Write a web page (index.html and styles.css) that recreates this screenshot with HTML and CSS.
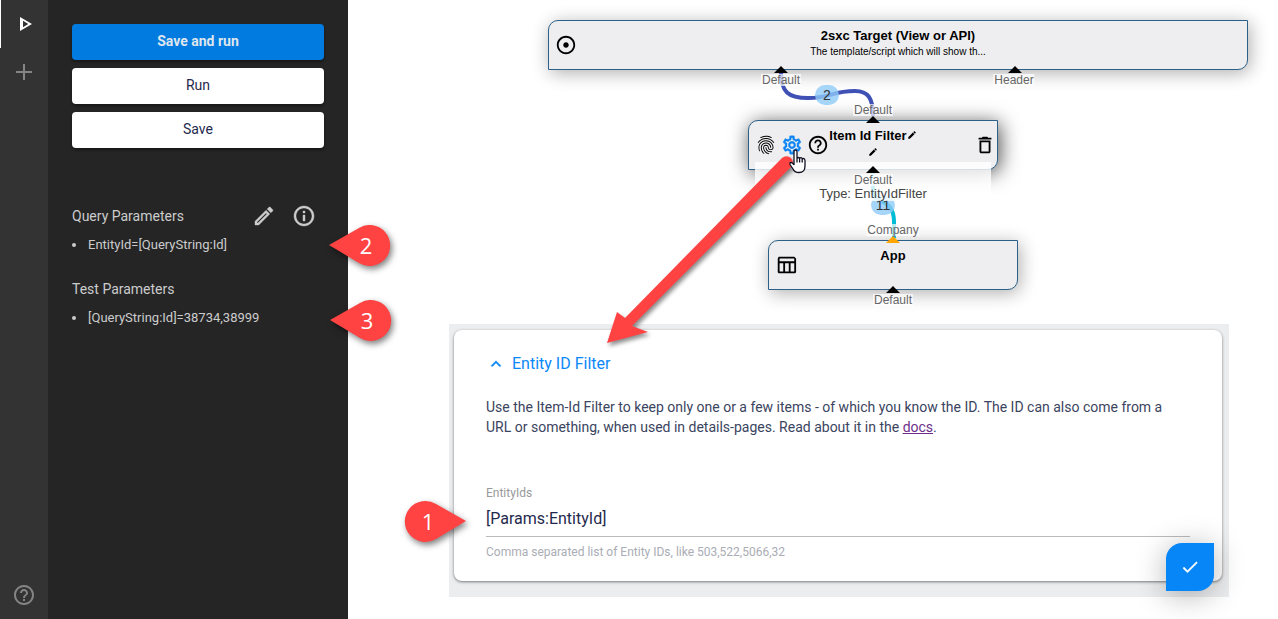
FILE: index.html
```html
<!DOCTYPE html>
<html lang="en">
<head>
<meta charset="utf-8">
<title>Visual Query Designer</title>
<link rel="stylesheet" href="styles.css">
</head>
<body>
<svg class="defs" aria-hidden="true">
  <symbol id="i-help" viewBox="0 0 24 24"><path d="M11 18h2v-2h-2v2zm1-16C6.48 2 2 6.48 2 12s4.48 10 10 10 10-4.48 10-10S17.52 2 12 2zm0 18c-4.41 0-8-3.59-8-8s3.59-8 8-8 8 3.59 8 8-3.59 8-8 8zm0-14c-2.21 0-4 1.79-4 4h2c0-1.1.9-2 2-2s2 .9 2 2c0 2-3 1.75-3 5h2c0-2.25 3-2.5 3-5 0-2.21-1.79-4-4-4z"/></symbol>
  <symbol id="i-pencil" viewBox="0 0 24 24"><path d="M3 17.25V21h3.75L17.81 9.94l-3.75-3.75L3 17.25zM20.71 7.04c.39-.39.39-1.02 0-1.41l-2.34-2.34a1 1 0 0 0-1.41 0l-1.83 1.83 3.75 3.75 1.83-1.83z"/></symbol>
</svg>
<div class="app">
  <nav class="rail">
    <button class="rail-btn active" aria-label="Run"><svg class="icon" viewBox="0 0 24 24"><path d="M10 8.640L15.270 12 10 15.360V8.640M7 5v14l12-7L7 5z"/></svg></button>
    <button class="rail-btn" aria-label="Add"><svg class="icon" viewBox="0 0 24 24"><path d="M20 13h-7v7h-2v-7H4v-2h7V4h2v7h7v2z"/></svg></button>
    <button class="rail-btn rail-end" aria-label="Help"><svg class="icon"><use href="#i-help"/></svg></button>
  </nav>
  <aside class="sidebar">
    <div class="actions">
      <button class="btn primary">Save and run</button>
      <button class="btn">Run</button>
      <button class="btn">Save</button>
    </div>
    <section class="params">
      <div class="params-head">
        <h2>Query Parameters</h2>
        <button class="icon-btn" aria-label="Edit parameters"><svg class="icon bold" viewBox="0 0 24 24"><path d="M14.060 9.020l.92.92L5.920 19H5v-.92l9.060-9.060M17.660 3c-.25 0-.51.1-.7.29l-1.830 1.830 3.750 3.750 1.830-1.830c.39-.39.39-1.020 0-1.410l-2.340-2.340c-.2-.2-.45-.29-.71-.29zm-3.600 3.190L3 17.250V21h3.750L17.810 9.940l-3.750-3.750z"/></svg></button>
        <button class="icon-btn" aria-label="Parameter info"><svg class="icon bold" viewBox="0 0 24 24"><path d="M11 7h2v2h-2zm0 4h2v6h-2zm1-9C6.480 2 2 6.480 2 12s4.480 10 10 10 10-4.480 10-10S17.520 2 12 2zm0 18c-4.410 0-8-3.590-8-8s3.590-8 8-8 8 3.590 8 8-3.590 8-8 8z"/></svg></button>
      </div>
      <ul><li>EntityId=[QueryString:Id]</li></ul>
    </section>
    <section class="params">
      <div class="params-head"><h2>Test Parameters</h2></div>
      <ul><li>[QueryString:Id]=38734,38999</li></ul>
    </section>
  </aside>
  <main class="main">
    <div class="canvas">
      <div class="node target">
        <svg class="node-icon" viewBox="0 0 24 24"><path d="M12 2C6.490 2 2 6.490 2 12s4.490 10 10 10 10-4.490 10-10S17.510 2 12 2zm0 18c-4.410 0-8-3.590-8-8s3.590-8 8-8 8 3.590 8 8-3.590 8-8 8zm3-8c0 1.660-1.340 3-3 3s-3-1.340-3-3 1.340-3 3-3 3 1.340 3 3z"/></svg>
        <div class="node-text"><h3>2sxc Target (View or API)</h3><p>The template/script which will show th...</p></div>
      </div>
      <div class="node filter">
        <div class="node-tools">
          <button class="tool" aria-label="Identity"><svg class="node-icon" viewBox="0 0 24 24"><path d="M17.81 4.47c-.08 0-.16-.02-.23-.06C15.66 3.42 14 3 12.01 3c-1.98 0-3.86.47-5.57 1.41-.24.13-.54.04-.68-.2-.13-.24-.04-.55.2-.68C7.82 2.52 9.86 2 12.01 2c2.13 0 3.99.47 6.03 1.52.25.13.34.43.21.67-.09.18-.26.28-.44.28zM3.500 9.720c-.1 0-.2-.03-.29-.09-.23-.16-.28-.47-.12-.7.99-1.400 2.250-2.500 3.750-3.270C9.980 4.040 14 4.030 17.150 5.650c1.500.77 2.760 1.860 3.750 3.250.16.22.11.54-.12.7-.23.16-.54.11-.7-.12-.9-1.260-2.040-2.250-3.390-2.940-2.870-1.470-6.540-1.470-9.400.01-1.360.7-2.500 1.700-3.400 2.960-.08.14-.23.21-.39.21zm6.250 12.070c-.13 0-.26-.05-.35-.15-.87-.87-1.340-1.430-2.010-2.640-.69-1.230-1.050-2.730-1.050-4.340 0-2.970 2.540-5.390 5.660-5.390s5.660 2.420 5.660 5.390c0 .28-.22.5-.5.5s-.5-.22-.5-.5c0-2.420-2.090-4.390-4.660-4.390-2.570 0-4.660 1.970-4.660 4.390 0 1.440.32 2.770.93 3.850.64 1.150 1.080 1.640 1.850 2.420.19.2.19.51 0 .71-.11.1-.24.15-.37.15zm7.170-1.850c-1.190 0-2.240-.3-3.100-.89-1.490-1.010-2.380-2.650-2.380-4.390 0-.28.22-.5.5-.5s.5.22.5.5c0 1.410.72 2.740 1.940 3.560.71.48 1.540.71 2.540.71.24 0 .64-.03 1.040-.1.27-.05.53.13.58.41.05.27-.13.53-.41.58-.57.11-1.070.12-1.210.12zM14.910 22c-.04 0-.09-.01-.13-.02-1.590-.44-2.630-1.030-3.720-2.100-1.400-1.390-2.170-3.240-2.170-5.220 0-1.620 1.380-2.940 3.080-2.940 1.700 0 3.080 1.320 3.080 2.940 0 1.070.93 1.940 2.080 1.940s2.080-.87 2.080-1.940c0-3.770-3.250-6.830-7.250-6.830-2.840 0-5.440 1.580-6.610 4.030-.39.81-.59 1.760-.59 2.800 0 .78.07 2.010.67 3.610.1.26-.03.55-.29.64-.26.1-.55-.04-.64-.29-.49-1.310-.73-2.610-.73-3.960 0-1.200.23-2.290.68-3.240 1.330-2.790 4.280-4.600 7.510-4.600 4.550 0 8.250 3.510 8.250 7.830 0 1.620-1.380 2.940-3.080 2.940s-3.080-1.320-3.080-2.940c0-1.070-.93-1.940-2.080-1.940s-2.080.87-2.080 1.940c0 1.710.66 3.310 1.870 4.510.95.94 1.860 1.460 3.270 1.850.27.07.42.35.35.61-.05.23-.26.38-.47.38z"/></svg></button>
          <button class="tool blue" aria-label="Configure"><svg class="node-icon bold" viewBox="0 0 24 24"><path d="M19.43 12.98c.04-.32.07-.64.07-.98 0-.34-.03-.66-.07-.98l2.11-1.65c.19-.15.24-.42.12-.64l-2-3.46c-.09-.16-.26-.25-.44-.25-.06 0-.12.01-.17.03l-2.49 1c-.52-.4-1.08-.73-1.69-.98l-.38-2.65C14.46 2.18 14.25 2 14 2h-4c-.25 0-.46.18-.49.42l-.38 2.65c-.61.25-1.17.59-1.69.98l-2.49-1c-.06-.02-.12-.03-.18-.03-.17 0-.34.09-.43.25l-2 3.46c-.13.22-.07.49.12.64l2.11 1.65c-.04.32-.07.65-.07.98 0 .33.03.66.07.98l-2.11 1.65c-.19.15-.24.42-.12.64l2 3.46c.09.16.26.25.44.25.06 0 .12-.01.17-.03l2.49-1c.52.4 1.08.73 1.69.98l.38 2.65c.03.24.24.42.49.42h4c.25 0 .46-.18.49-.42l.38-2.65c.61-.25 1.17-.59 1.69-.98l2.49 1c.06.02.12.03.18.03.17 0 .34-.09.43-.25l2-3.46c.12-.22.07-.49-.12-.64l-2.11-1.65zm-1.98-1.71c.04.31.05.52.05.73 0 .21-.02.43-.05.73l-.14 1.13.89.7 1.08.84-.7 1.21-1.27-.51-1.04-.42-.9.68c-.43.32-.84.56-1.25.73l-1.06.43-.16 1.13-.2 1.35h-1.4l-.19-1.35-.16-1.13-1.06-.43c-.43-.18-.83-.41-1.23-.71l-.91-.7-1.06.43-1.27.51-.7-1.21 1.08-.84.89-.7-.14-1.13c-.03-.31-.05-.54-.05-.74s.02-.43.05-.73l.14-1.13-.89-.7-1.08-.84.7-1.21 1.27.51 1.04.42.9-.68c.43-.32.84-.56 1.25-.73l1.06-.43.16-1.13.2-1.35h1.39l.19 1.35.16 1.13 1.06.43c.43.18.83.41 1.23.71l.91.7 1.06-.43 1.27-.51.7 1.21-1.07.85-.89.7.14 1.13zM12 8c-2.21 0-4 1.79-4 4s1.79 4 4 4 4-1.79 4-4-1.79-4-4-4zm0 6c-1.1 0-2-.9-2-2s.9-2 2-2 2 .9 2 2-.9 2-2 2z"/></svg></button>
          <button class="tool" aria-label="Help"><svg class="node-icon"><use href="#i-help"/></svg></button>
        </div>
        <div class="node-text"><h3>Item Id Filter<svg class="mini"><use href="#i-pencil"/></svg></h3><p><svg class="mini"><use href="#i-pencil"/></svg></p></div>
        <button class="tool delete" aria-label="Delete"><svg class="node-icon" viewBox="0 0 24 24"><path d="M6 19c0 1.100.9 2 2 2h8c1.100 0 2-.9 2-2V7H6v12zM8 9h8v10H8V9zm7.500-5l-1-1h-5l-1 1H5v2h14V4z"/></svg></button>
      </div>
      <div class="node source">
        <svg class="node-icon" viewBox="0 0 24 24"><path fill-rule="evenodd" d="M4 3h17l2 2v15l-1 1H4l-1-1V5zM5 5v3h16V5zM5 10v9h4v-9zM11 10v9h4v-9zM17 10v9h4v-9z"/></svg>
        <div class="node-text"><h3>App</h3></div>
      </div>
      <svg class="wires" viewBox="0 0 930 324" aria-hidden="true">
        <g fill="none" stroke-width="4">
          <path stroke="#3f51b5" d="M433 72C433 92 440 98 460 98C482 98 484 91 507 91C520 91 525 98 525 116"/>
          <path stroke="#00bcd4" d="M525 170V190C525 206 546 196 546 222V238"/>
        </g>
        <path d="M426 73l7-7 7 7zM660 73l7-7 7 7zM518 123l7-7 7 7zM538 293l7-7 7 7z"/>
        <path fill="#ffa500" d="M538 243l7-7 7 7z"/>
      </svg>
      <span class="count count-a">2</span>
      <span class="count count-b">11</span>
      <span class="port port-a">Default</span>
      <span class="port port-b">Header</span>
      <span class="port port-c">Default</span>
      <div class="type-tip">Type: EntityIdFilter</div>
      <svg class="out-mark" viewBox="0 0 14 7" aria-hidden="true"><path d="M0 7l7-7 7 7z"/></svg>
      <span class="port port-d">Default</span>
      <span class="port port-e">Company</span>
      <span class="port port-f">Default</span>
    </div>
    <div class="dialog">
      <form class="card">
        <button type="button" class="card-head"><svg class="chevron bold" viewBox="0 0 24 24"><path d="M12 8l-6 6 1.410 1.410L12 10.830l4.590 4.580L18 14z"/></svg>Entity ID Filter</button>
        <p class="intro">Use the Item-Id Filter to keep only one or a few items - of which you know the ID. The ID can also come from a URL or something, when used in details-pages. Read about it in the <a href="#docs">docs</a>.</p>
        <label for="entity-ids">EntityIds</label>
        <input id="entity-ids" type="text" value="[Params:EntityId]" aria-describedby="entity-hint">
        <p class="hint" id="entity-hint">Comma separated list of Entity IDs, like 503,522,5066,32</p>
      </form>
      <button class="confirm" aria-label="Save"><svg class="bold" viewBox="0 0 24 24"><path d="M9 16.170L4.830 12l-1.420 1.410L9 19 21 7l-1.410-1.410z"/></svg></button>
    </div>
    <svg class="arrow" viewBox="0 0 200 200" aria-hidden="true">
      <path fill="#ff4343" d="M182 16a6 6 0 0 1 9 9L32 184l16 6-41 11 10-31 8 6z"/>
    </svg>
    <svg class="pointer" viewBox="0 0 18 26" aria-hidden="true"><path fill="#fff" stroke="#112" stroke-width="1.300" stroke-linejoin="round" d="M5 16V3q0-2 1.500-2T8 3v7q0-1.500 1.300-1.500T10.600 10q0-1.300 1.300-1.300T13.200 10.500q0-1 1.300-1t1.500 2V17q0 6.500-6 6.500Q5.500 23.500 4 20L1 15.500q-.5-2 1-2T5 16M8 10v3.500M10.600 10v3.500M13.200 10.500v3"/></svg>
  </main>
  <div class="callout callout-2"><svg viewBox="0 0 62 42" aria-hidden="true"><path d="M0 20L30 3A20.500 20.500 0 1 1 30 38z"/></svg><span>2</span></div>
  <div class="callout callout-3"><svg viewBox="0 0 62 42" aria-hidden="true"><path d="M0 20L30 3A20.500 20.500 0 1 1 30 38z"/></svg><span>3</span></div>
  <div class="callout callout-1"><svg viewBox="0 0 62 42" aria-hidden="true"><path d="M62 20L32 3A20.500 20.500 0 1 0 32 38z"/></svg><span>1</span></div>
</div>
</body>
</html>
```

FILE: styles.css
```css
* { box-sizing: border-box; }
body { margin: 0; background: #fff; font-family: Roboto, sans-serif; font-size: 14px; color: #1f2a4d; }
h2, h3, p, ul { margin: 0; padding: 0; font-weight: 400; }
button { border: 0; padding: 0; background: none; font: inherit; color: inherit; cursor: pointer; }
svg { display: block; fill: currentColor; }
.defs { position: absolute; width: 0; height: 0; }
.icon { width: 24px; height: 24px; }
.bold { stroke: currentColor; stroke-width: .4; }

.app { position: relative; display: flex; min-height: 100vh; overflow: hidden; }

.rail { flex: none; width: 48px; display: flex; flex-direction: column; background: #333; color: #858585; }
.rail-btn { height: 48px; display: grid; place-items: center; }
.rail-btn.active { color: #fff; border-left: 1px solid #fff; }
.rail-end { margin-top: auto; }

.sidebar { flex: none; width: 300px; padding: 24px; background: #252526; color: #ccc; }
.actions { display: flex; flex-direction: column; gap: 8px; margin-bottom: 56px; }
.btn { height: 36px; padding-bottom: 2px; border-radius: 4px; background: #fff; color: #1f2a4d; box-shadow: 0 2px 3px rgba(0, 0, 0, .4); }
.btn.primary { background: #027be0; color: #dfe6ee; font-weight: 700; }
.params { margin-bottom: 24px; }
.params-head { display: flex; align-items: center; min-height: 24px; }
.params-head h2 { flex: 1; font-size: 14px; line-height: 24px; }
.icon-btn { width: 24px; height: 24px; margin-right: 8px; }
.icon-btn + .icon-btn { margin-left: 8px; }
.params ul { list-style: none; font-size: 13px; line-height: 16px; margin-top: 9px; }
.params li { display: flex; align-items: center; gap: 12px; }
.params li::before { content: ""; width: 4px; height: 4px; border-radius: 2px; background: #ccc; }

.main { position: relative; flex: 1; min-width: 0; padding-bottom: 22px; }
.canvas { position: relative; height: 324px; font-family: "Liberation Sans", Arial, sans-serif; color: #000; }
.node { position: absolute; display: flex; height: 50px; border: 1px solid #2c6088; border-radius: 10px 0; background: #eeeef0; box-shadow: 2px 3px 18px rgba(0, 0, 0, .32); }
.node-icon { width: 22px; height: 22px; }
.node > .node-icon { align-self: center; margin-left: 6px; }
.target { left: 200px; top: 20px; width: 700px; }
.filter { left: 400px; top: 120px; width: 250px; box-shadow: 2px 3px 20px rgba(0, 0, 0, .7); }
.source { left: 420px; top: 240px; width: 250px; }
.node-text { position: absolute; inset: 7px 0 0; text-align: center; pointer-events: none; }
.node-text h3 { display: flex; justify-content: center; font-size: 13px; font-weight: 700; line-height: 16px; }
.node-text p { font-size: 10px; line-height: 16px; }
.mini { width: 10px; height: 10px; margin-top: 2px; }
.node-text p .mini { margin: 3px auto 0; }
.node-tools { display: flex; align-items: center; gap: 4px; padding-left: 6px; }
.blue { color: #0a84f5; }
.delete { align-self: center; margin-left: auto; margin-right: 1px; }
.wires { position: absolute; left: 0; top: 0; width: 930px; height: 324px; }
.port { position: absolute; padding: 0 1px; background: rgba(255, 255, 255, .7); color: #666; font-size: 12px; line-height: 12px; transform: translateX(-50%); }
.port-a { left: 433px; top: 74px; }
.port-b { left: 666px; top: 74px; }
.port-c { left: 525px; top: 104px; }
.port-d { left: 525px; top: 174px; }
.port-e { left: 545px; top: 224px; }
.port-f { left: 545px; top: 294px; }
.count { position: absolute; width: 24px; height: 20px; border-radius: 10px; background: rgba(144, 202, 249, .8); color: #333; font-size: 14px; line-height: 20px; text-align: center; }
.count-a { left: 467px; top: 85px; }
.count-b { left: 523px; top: 195px; }
.type-tip { position: absolute; left: 407px; top: 162px; width: 236px; height: 39px; padding-top: 24px; background: rgba(255, 255, 255, .8); color: #444; font-size: 13px; line-height: 15px; text-align: center; }
.out-mark { position: absolute; left: 518px; top: 166px; width: 14px; height: 7px; }

.dialog { position: relative; margin: 0 49px 0 101px; padding: 6px 7px 16px 5px; background: #ecedef; }
.card { padding: 22px 32px 21px; border-radius: 8px; background: #fff; box-shadow: 0 1px 3px rgba(0, 0, 0, .5); }
.card-head { display: flex; align-items: center; gap: 6px; color: #0a88f8; font-size: 16px; line-height: 24px; }
.chevron { width: 20px; height: 20px; }
.intro { margin: 21px 0 48px; line-height: 20px; color: #3b4460; }
.intro a { color: #6b2f8a; }
.card label { display: block; font-size: 12px; line-height: 16px; color: #999; }
.card input { display: block; width: 100%; height: 36px; padding: 0; border: 0; border-bottom: 1px solid #bbb; outline: 0; background: none; font: 16px/20px Roboto, sans-serif; color: #1f2a4d; }
.hint { margin-top: 7px; font-size: 12px; line-height: 16px; color: #aaadb5; }
.confirm { position: absolute; right: 15px; bottom: 6px; width: 48px; height: 48px; display: grid; place-items: center; border-radius: 16px 0; background: #0786f7; color: #fff; box-shadow: 0 4px 30px rgba(0, 0, 0, .3); }
.confirm svg { width: 20px; height: 20px; }

.arrow { position: absolute; left: 252px; top: 142px; width: 200px; height: 200px; overflow: visible; filter: drop-shadow(2px 3px 2px rgba(0, 0, 0, .45)); }
.pointer { position: absolute; left: 441px; top: 149px; width: 18px; height: 26px; }

.callout { position: absolute; width: 62px; height: 42px; color: #fff; font: 22px/40px "Open Sans", sans-serif; text-align: center; }
.callout svg { position: absolute; inset: 0; width: 62px; height: 42px; overflow: visible; fill: #ff4343; filter: drop-shadow(2px 3px 3px rgba(0, 0, 0, .5)); }
.callout span { position: relative; display: block; padding-left: 12px; }
.callout-1 { left: 404px; top: 501px; }
.callout-1 span { padding: 0 14px 0 0; }
.callout-2 { left: 329px; top: 225px; }
.callout-3 { left: 330px; top: 300px; }
```
